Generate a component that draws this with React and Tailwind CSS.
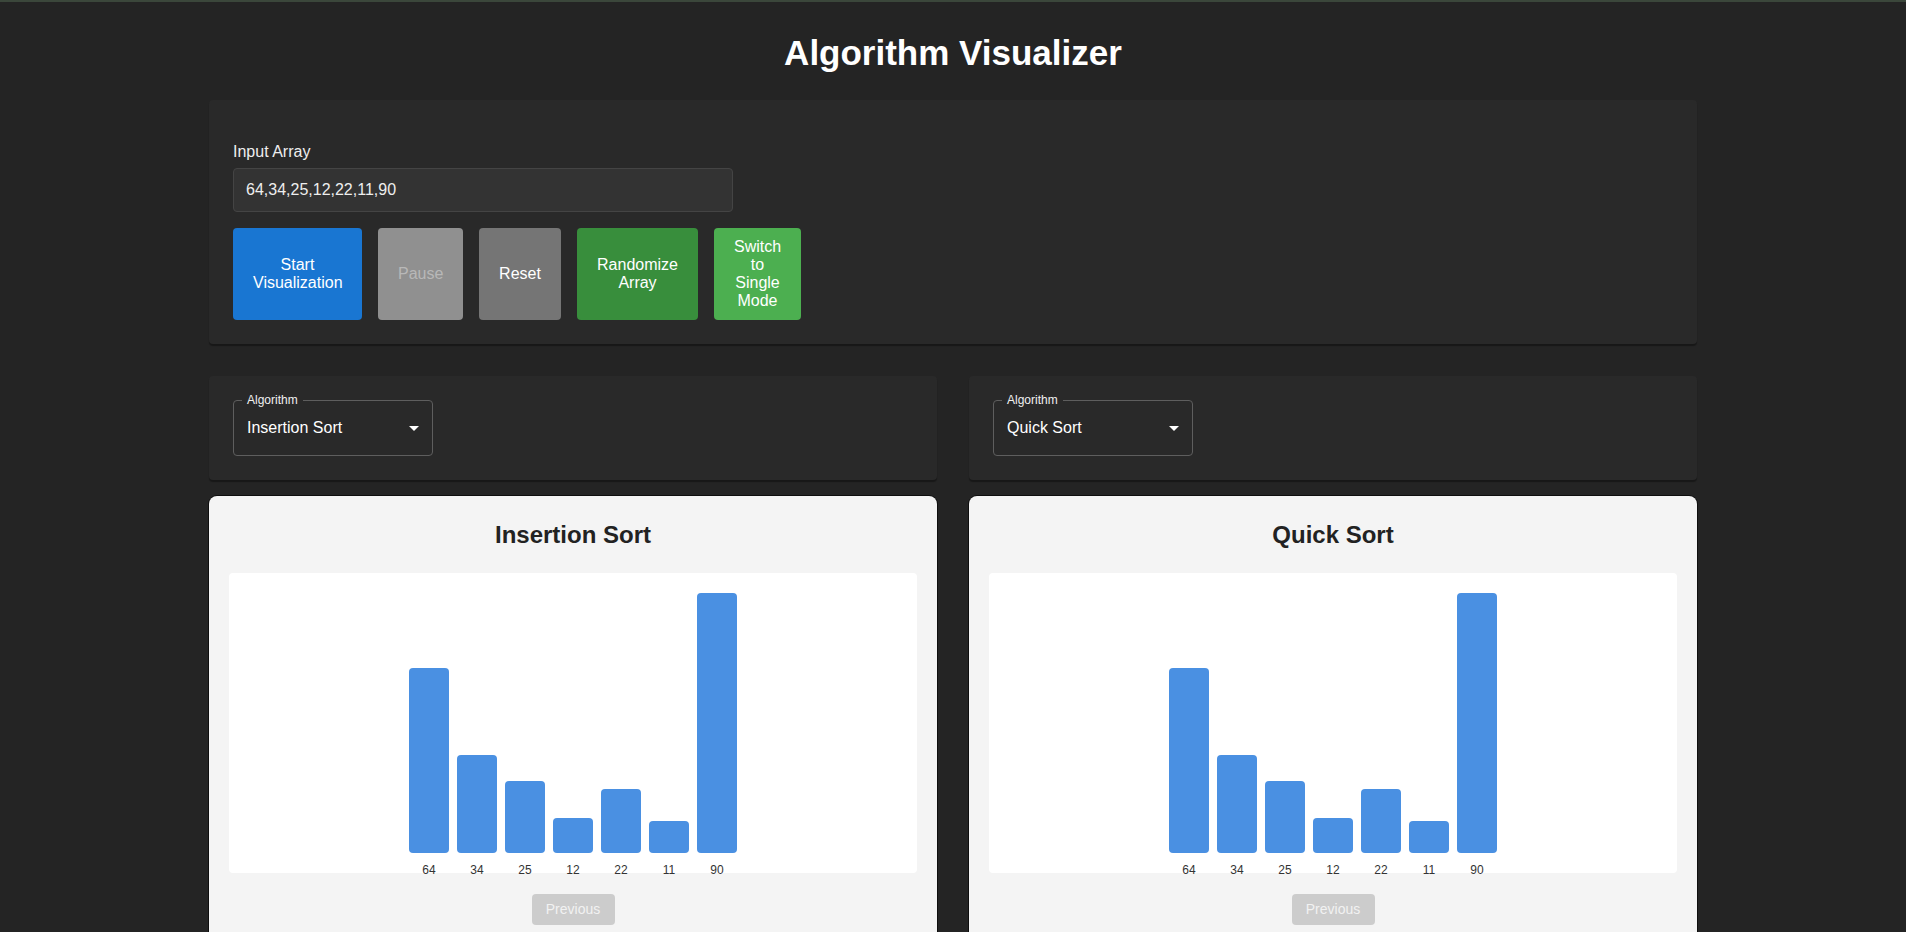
import React, { useState } from 'react';

const initial = [64, 34, 25, 12, 22, 11, 90];

function AlgoSelect({ value }) {
  return (
    <div className="relative w-[200px] h-14">
      <div className="h-full rounded border border-[#5e5e5e] flex items-center pl-[13px] text-[16px] text-white">
        {value}
      </div>
      <span className="absolute -top-[7px] left-[9px] px-[5px] bg-[#292929] text-[12px] leading-[15px] text-[#f0f0f0]">
        Algorithm
      </span>
      <svg className="absolute right-[7px] top-1/2 -translate-y-1/2" width="24" height="24" viewBox="0 0 24 24">
        <path d="M7 10l5 5 5-5z" fill="#ffffff" />
      </svg>
    </div>
  );
}

function Chart({ title, data }) {
  const max = Math.max(...data);
  return (
    <div className="rounded-lg bg-[#f4f4f4] px-5 pt-[25px] pb-10 shadow-[0_0_0_1px_rgba(0,0,0,0.6)]">
      <h2 className="text-center text-[24px] leading-[28px] font-bold text-[#222]">{title}</h2>
      <div className="mt-6 h-[300px] bg-white rounded flex items-end justify-center gap-2">
        {data.map((v, i) => (
          <div key={i} className="flex flex-col items-center w-10">
            <div className="w-10 rounded bg-[#4a90e2]" style={{ height: (v / max) * 260 }} />
            <div className="h-5 pt-[11px] text-[12px] leading-3 text-[#333]">{v}</div>
          </div>
        ))}
      </div>
      <div className="mt-[21px] flex justify-center">
        <button disabled className="w-[83px] h-[31px] rounded bg-[#cccccc] text-[14px] text-[#f2f2f2]">
          Previous
        </button>
      </div>
    </div>
  );
}

export default function App() {
  const [input, setInput] = useState(initial.join(','));
  const left = 'Insertion Sort';
  const right = 'Quick Sort';

  return (
    <div className="min-h-screen bg-[#242424] border-t-2 border-[#3b473b] font-['Liberation_Sans',Arial,sans-serif]">
      <h1 className="text-center text-[35px] leading-[40px] font-bold text-white pt-[31px] pb-[27px]">
        Algorithm Visualizer
      </h1>

      <div className="mx-auto max-w-[1536px] px-6">
        <div className="rounded bg-[#292929] pt-[43px] px-6 pb-6 shadow-[0_2px_1px_rgba(0,0,0,0.35)]">
          <label className="block text-[16px] leading-[18px] text-[#eeeeee] mb-[7px]">Input Array</label>
          <input
            value={input}
            onChange={(e) => setInput(e.target.value)}
            className="w-[500px] h-11 px-3 rounded border border-[#444] bg-[#333333] text-[16px] text-[#eeeeee] outline-none"
          />
          <div className="mt-4 flex gap-4 text-[16px] leading-[18px]">
            <button className="w-[129px] h-[92px] rounded bg-[#1976d2] text-white px-5">
              Start Visualization
            </button>
            <button disabled className="w-[85px] h-[92px] rounded bg-[#909090] text-[#b8b8b8] px-5">
              Pause
            </button>
            <button className="w-[82px] h-[92px] rounded bg-[#757575] text-white px-5">
              Reset
            </button>
            <button className="w-[121px] h-[92px] rounded bg-[#388e3c] text-white px-5">
              Randomize Array
            </button>
            <button className="w-[87px] h-[92px] rounded bg-[#4caf50] text-white px-5">
              Switch to Single Mode
            </button>
          </div>
        </div>

        <div className="mt-8 grid grid-cols-2 gap-8">
          {[left, right].map((name) => (
            <div key={name}>
              <div className="rounded bg-[#292929] p-6 shadow-[0_2px_1px_rgba(0,0,0,0.35)]">
                <AlgoSelect value={name} />
              </div>
              <div className="mt-4">
                <Chart title={name} data={initial} />
              </div>
            </div>
          ))}
        </div>
      </div>
    </div>
  );
}
